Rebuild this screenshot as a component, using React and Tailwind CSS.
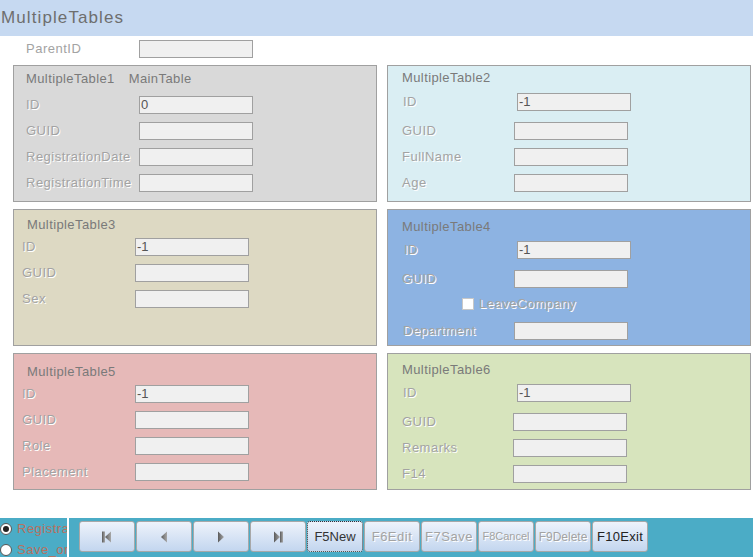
import React from "react";

const lbl = "text-[13px] tracking-[0.5px] text-[#a3a3a3] [text-shadow:1px_1px_0_#ffffff] whitespace-nowrap";

function Input({ value }) {
  return (
    <div className="w-[114px] h-[18px] bg-[#f0f0f0] border border-[#a0a0a0] text-[13px] leading-[16px] pl-[1px] text-[#555] shrink-0">
      {value}
    </div>
  );
}

function Row({ label, value, cls, lcls }) {
  return (
    <div className={"flex items-center h-[18px] " + cls}>
      <div className={"shrink-0 " + lcls + " " + lbl}>{label}</div>
      <Input value={value} />
    </div>
  );
}

function Title({ cls, children }) {
  return (
    <div className={"h-[15px] leading-[15px] text-[13px] tracking-[0.4px] text-[#7a7a7a] whitespace-nowrap " + cls}>
      {children}
    </div>
  );
}

function Panel({ bg, children }) {
  return (
    <div className={"h-[137px] border border-[#a0a0a0] flex flex-col " + bg}>{children}</div>
  );
}

function NavIcon({ kind }) {
  return (
    <svg width="12" height="12" viewBox="0 0 12 12">
      <defs>
        <linearGradient id={"g" + kind} x1="0" y1="0" x2="1" y2="0">
          <stop offset="0" stopColor="#5a5a5a" />
          <stop offset="1" stopColor="#a8a8a8" />
        </linearGradient>
      </defs>
      {kind === "first" && (
        <g fill={"url(#g" + kind + ")"}>
          <rect x="1" y="0.5" width="3" height="11" />
          <polygon points="10,0.5 4,6 10,11.5" />
        </g>
      )}
      {kind === "prev" && <polygon fill={"url(#g" + kind + ")"} points="9,0.5 3,6 9,11.5" />}
      {kind === "next" && <polygon fill={"url(#g" + kind + ")"} points="3,0.5 9,6 3,11.5" />}
      {kind === "last" && (
        <g fill={"url(#g" + kind + ")"}>
          <polygon points="2,0.5 8,6 2,11.5" />
          <rect x="8" y="0.5" width="3" height="11" />
        </g>
      )}
    </svg>
  );
}

const btn =
  "w-[56px] h-[31px] shrink-0 rounded-[3px] bg-linear-to-b from-[#eef3fb] to-[#c3d6ef] flex items-center justify-center whitespace-nowrap";

export default function App() {
  return (
    <div className="w-[753px] h-[557px] overflow-hidden bg-white flex flex-col font-['Liberation_Sans',sans-serif]">
      <div className="h-[36px] shrink-0 bg-[#c6d9f1] flex items-center pl-[1px] text-[17px] tracking-[1.1px] text-[#6e6e6e]">
        MultipleTables
      </div>

      <div className="h-[29px] shrink-0 flex items-start pt-[4px]">
        <div className={"w-[139px] pl-[26px] leading-[18px] " + lbl}>ParentID</div>
        <Input value="" />
      </div>

      <div className="ml-[13px] grid grid-cols-[364px_364px] gap-x-[10px] gap-y-[7px]">
        <Panel bg="bg-[#d9d9d9]">
          <Title cls="mt-[5px] pl-[12px]">
            MultipleTable1<span className="ml-[14px]">MainTable</span>
          </Title>
          <Row label="ID" value="0" cls="mt-[10px]" lcls="w-[125px] pl-[12px]" />
          <Row label="GUID" value="" cls="mt-[8px]" lcls="w-[125px] pl-[12px]" />
          <Row label="RegistrationDate" value="" cls="mt-[8px]" lcls="w-[125px] pl-[12px]" />
          <Row label="RegistrationTime" value="" cls="mt-[8px]" lcls="w-[125px] pl-[12px]" />
        </Panel>

        <Panel bg="bg-[#daeef3]">
          <Title cls="mt-[4px] pl-[14px]">MultipleTable2</Title>
          <Row label="ID" value="-1" cls="mt-[8px]" lcls="w-[129px] pl-[15px]" />
          <Row label="GUID" value="" cls="mt-[11px]" lcls="w-[126px] pl-[14px]" />
          <Row label="FullName" value="" cls="mt-[8px]" lcls="w-[126px] pl-[14px]" />
          <Row label="Age" value="" cls="mt-[8px]" lcls="w-[126px] pl-[14px]" />
        </Panel>

        <Panel bg="bg-[#ddd9c3]">
          <Title cls="mt-[7px] pl-[13px]">MultipleTable3</Title>
          <Row label="ID" value="-1" cls="mt-[6px]" lcls="w-[121px] pl-[8px]" />
          <Row label="GUID" value="" cls="mt-[8px]" lcls="w-[121px] pl-[8px]" />
          <Row label="Sex" value="" cls="mt-[8px]" lcls="w-[121px] pl-[8px]" />
        </Panel>

        <Panel bg="bg-[#8db3e2]">
          <Title cls="mt-[9px] pl-[14px]">MultipleTable4</Title>
          <Row label="ID" value="-1" cls="mt-[7px]" lcls="w-[129px] pl-[16px]" />
          <Row label="GUID" value="" cls="mt-[11px]" lcls="w-[126px] pl-[14px]" />
          <div className="mt-[9px] h-[13px] flex items-center pl-[74px]">
            <div className="w-[12px] h-[12px] bg-white border border-[#c8c8c8] shrink-0" />
            <div className={"ml-[5px] " + lbl}>LeaveCompany</div>
          </div>
          <Row label="Department" value="" cls="mt-[12px]" lcls="w-[126px] pl-[15px]" />
        </Panel>

        <Panel bg="bg-[#e6b9b8]">
          <Title cls="mt-[10px] pl-[13px]">MultipleTable5</Title>
          <Row label="ID" value="-1" cls="mt-[6px]" lcls="w-[121px] pl-[8px]" />
          <Row label="GUID" value="" cls="mt-[8px]" lcls="w-[121px] pl-[8px]" />
          <Row label="Role" value="" cls="mt-[8px]" lcls="w-[121px] pl-[8px]" />
          <Row label="Placement" value="" cls="mt-[8px]" lcls="w-[121px] pl-[8px]" />
        </Panel>

        <Panel bg="bg-[#d7e4bd]">
          <Title cls="mt-[8px] pl-[14px]">MultipleTable6</Title>
          <Row label="ID" value="-1" cls="mt-[7px]" lcls="w-[129px] pl-[15px]" />
          <Row label="GUID" value="" cls="mt-[11px]" lcls="w-[125px] pl-[14px]" />
          <Row label="Remarks" value="" cls="mt-[8px]" lcls="w-[125px] pl-[14px]" />
          <Row label="F14" value="" cls="mt-[8px]" lcls="w-[125px] pl-[14px]" />
        </Panel>
      </div>

      <div className="mt-[28px] h-[39px] shrink-0 flex bg-[#4bacc6]">
        <div className="w-[67px] shrink-0 overflow-hidden flex flex-col pt-[4px]">
          <div className="flex items-center h-[14px] whitespace-nowrap">
            <div className="w-[12px] h-[12px] rounded-full bg-white border border-[#555] flex items-center justify-center shrink-0">
              <div className="w-[6px] h-[6px] rounded-full bg-[#222]" />
            </div>
            <span className="ml-[5px] text-[13px] tracking-[0.5px] text-[#b9705e]">Registration</span>
          </div>
          <div className="flex items-center h-[14px] mt-[7px] whitespace-nowrap">
            <div className="w-[12px] h-[12px] rounded-full bg-white border border-[#555] shrink-0" />
            <span className="ml-[5px] text-[13px] tracking-[0.5px] text-[#b9705e]">Save_order</span>
          </div>
        </div>
        <div className="w-[2px] shrink-0 bg-white" />
        <div className="flex gap-px pl-[10px] pt-[3px]">
          <div className={btn + " border border-[#a8a8a8]"}><NavIcon kind="first" /></div>
          <div className={btn + " border border-[#a8a8a8]"}><NavIcon kind="prev" /></div>
          <div className={btn + " border border-[#a8a8a8]"}><NavIcon kind="next" /></div>
          <div className={btn + " border border-[#a8a8a8]"}><NavIcon kind="last" /></div>
          <div className={btn + " border border-dotted border-[#333] text-[13px] text-[#333]"}>F5New</div>
          <div className={btn + " border border-[#a8a8a8] " + lbl}>F6Edit</div>
          <div className={btn + " border border-[#a8a8a8] " + lbl}>F7Save</div>
          <div className={btn + " border border-[#a8a8a8] text-[11px] text-[#a3a3a3] [text-shadow:1px_1px_0_#ffffff]"}>F8Cancel</div>
          <div className={btn + " border border-[#a8a8a8] text-[12px] text-[#a3a3a3] [text-shadow:1px_1px_0_#ffffff]"}>F9Delete</div>
          <div className={btn + " border border-[#a8a8a8] text-[13px] tracking-[0.3px] text-[#222]"}>F10Exit</div>
        </div>
      </div>
    </div>
  );
}
